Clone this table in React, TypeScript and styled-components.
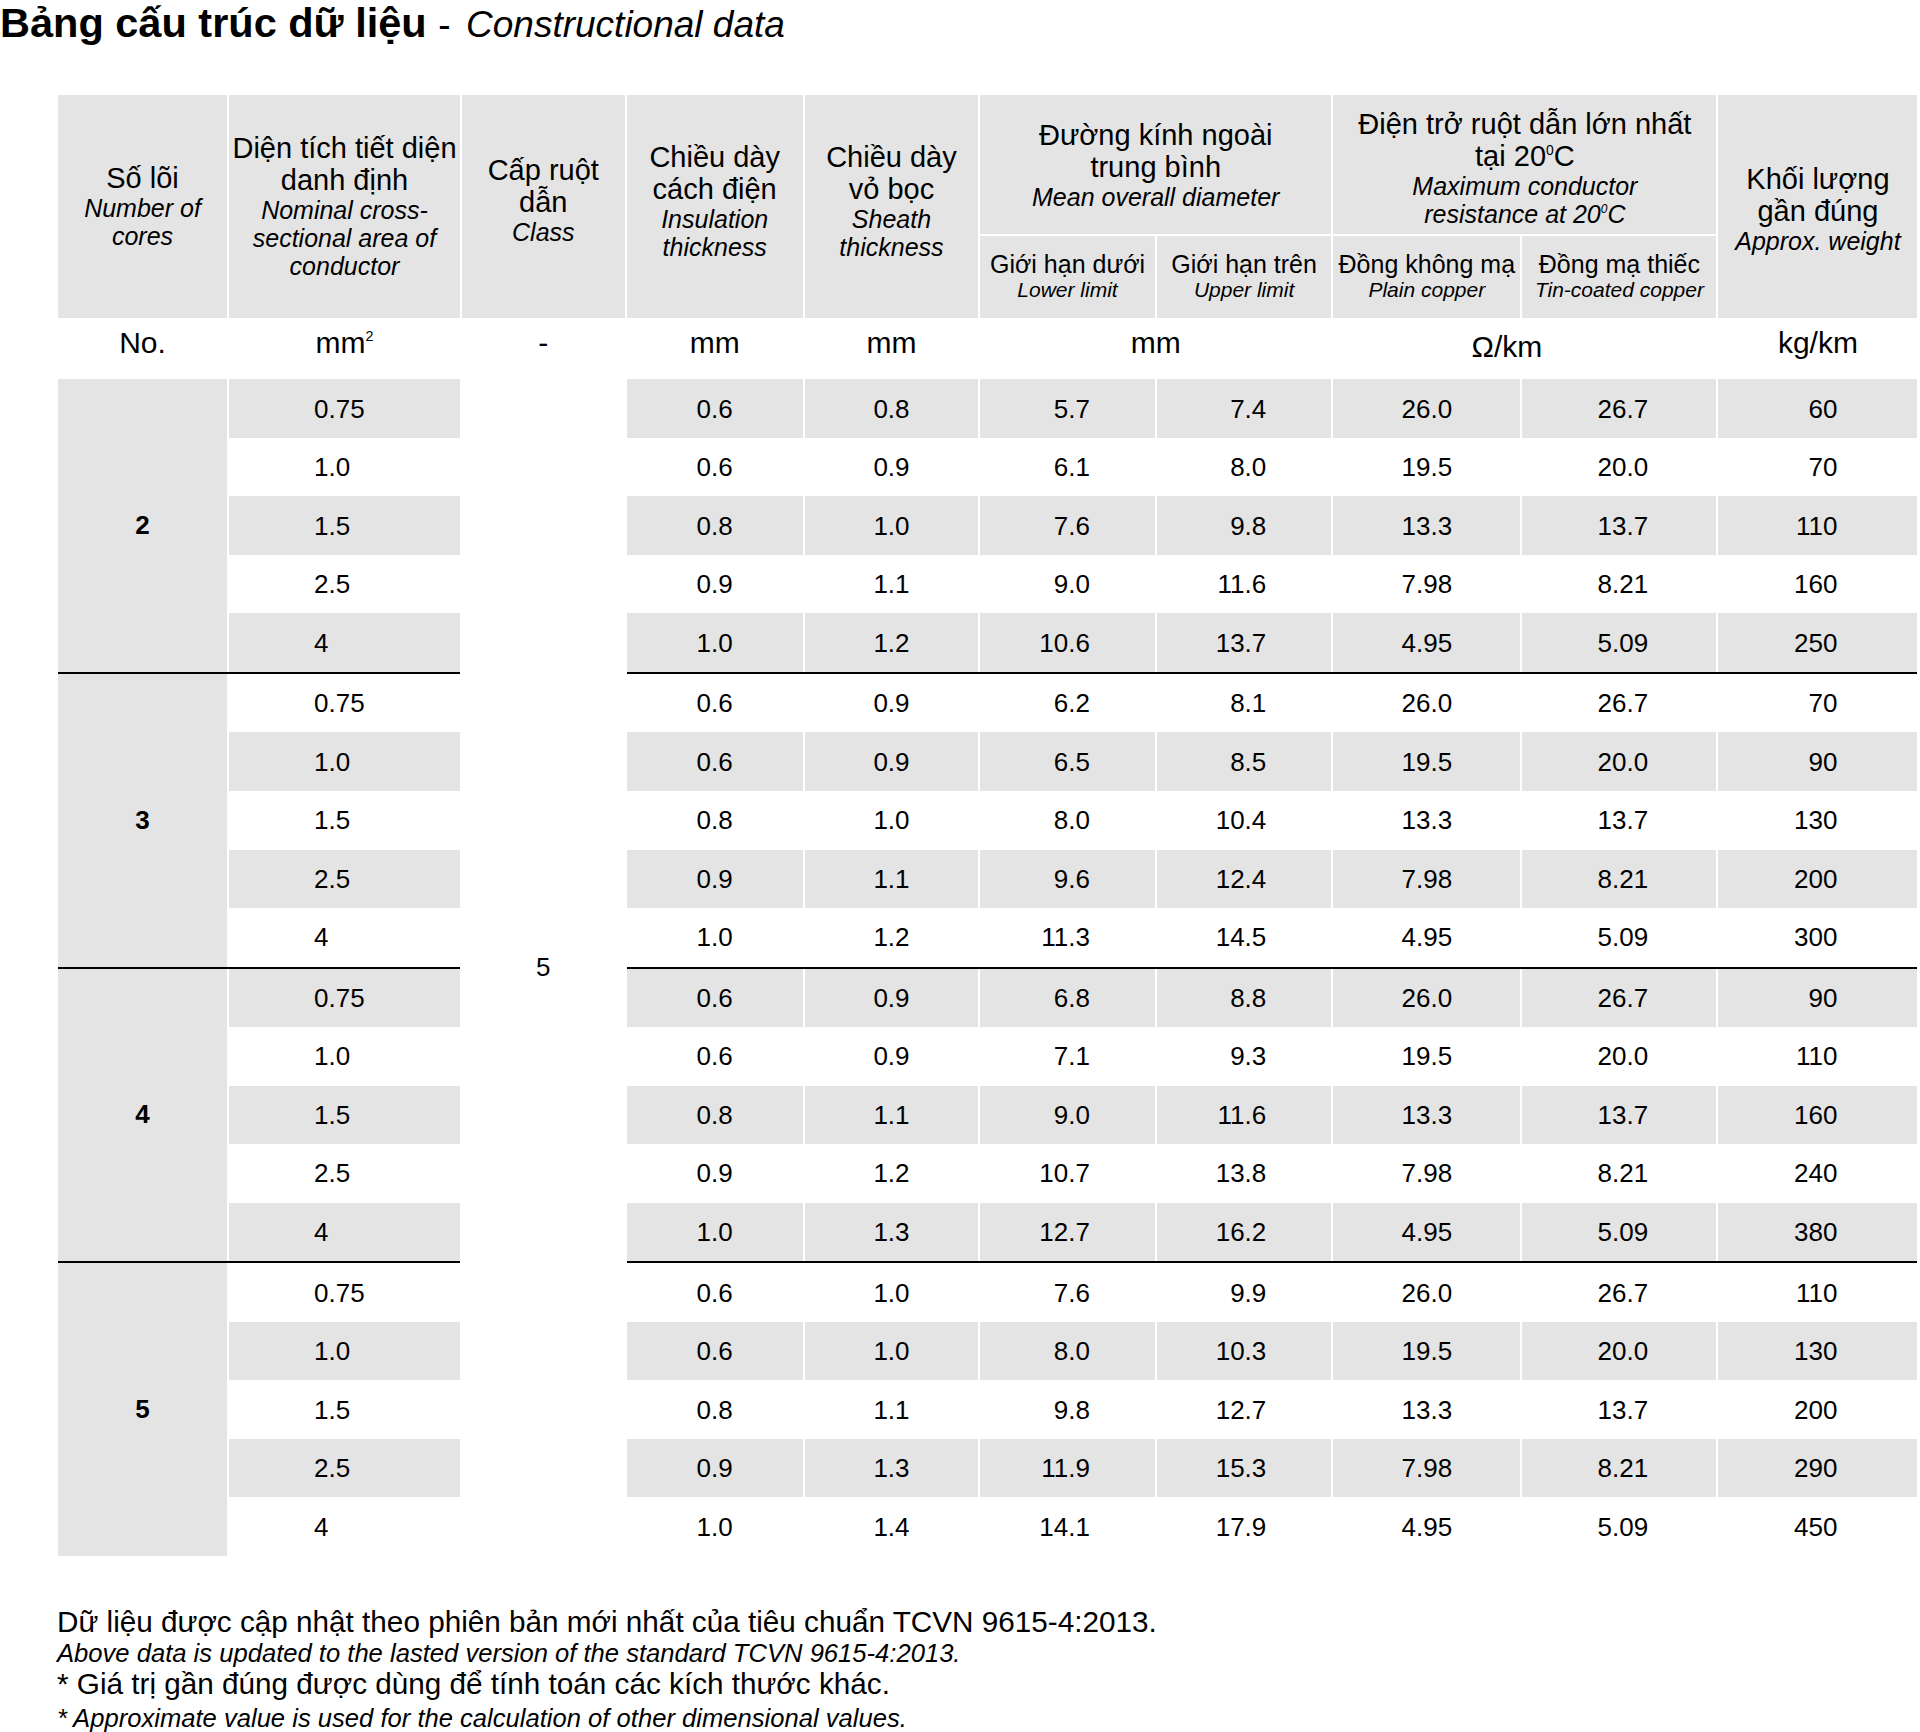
import React from "react";
import styled, { createGlobalStyle, css } from "styled-components";

const GlobalStyle = createGlobalStyle`
  html, body { margin: 0; padding: 0; background: #ffffff; }
  body {
    font-family: "Liberation Sans", Arial, "Noto Sans", sans-serif;
    color: #000;
    overflow-x: hidden;
  }
`;

const GRAY = "#e4e4e4";
const COLS = [168.3, 230, 162, 175.4, 172.7, 174, 173.7, 186.3, 193.3, 198];
const GAP = 2.7;
const TABLE_WIDTH = COLS.reduce((s, w) => s + w, 0) + GAP * (COLS.length + 1);

type Align = "left" | "center" | "right";
type ColCfg = { $align: Align; $pl?: number; $pr?: number };

const VALUE_COLS: ColCfg[] = [
  { $align: "center" },
  { $align: "center" },
  { $align: "right", $pr: 65 },
  { $align: "right", $pr: 65 },
  { $align: "center" },
  { $align: "center", $pl: 7 },
  { $align: "right", $pr: 80 },
];

type Row = [string, string, string, string, string, string, string, string];

const GROUPS: { cores: string; rows: Row[] }[] = [
  {
    cores: "2",
    rows: [
      ["0.75", "0.6", "0.8", "5.7", "7.4", "26.0", "26.7", "60"],
      ["1.0", "0.6", "0.9", "6.1", "8.0", "19.5", "20.0", "70"],
      ["1.5", "0.8", "1.0", "7.6", "9.8", "13.3", "13.7", "110"],
      ["2.5", "0.9", "1.1", "9.0", "11.6", "7.98", "8.21", "160"],
      ["4", "1.0", "1.2", "10.6", "13.7", "4.95", "5.09", "250"],
    ],
  },
  {
    cores: "3",
    rows: [
      ["0.75", "0.6", "0.9", "6.2", "8.1", "26.0", "26.7", "70"],
      ["1.0", "0.6", "0.9", "6.5", "8.5", "19.5", "20.0", "90"],
      ["1.5", "0.8", "1.0", "8.0", "10.4", "13.3", "13.7", "130"],
      ["2.5", "0.9", "1.1", "9.6", "12.4", "7.98", "8.21", "200"],
      ["4", "1.0", "1.2", "11.3", "14.5", "4.95", "5.09", "300"],
    ],
  },
  {
    cores: "4",
    rows: [
      ["0.75", "0.6", "0.9", "6.8", "8.8", "26.0", "26.7", "90"],
      ["1.0", "0.6", "0.9", "7.1", "9.3", "19.5", "20.0", "110"],
      ["1.5", "0.8", "1.1", "9.0", "11.6", "13.3", "13.7", "160"],
      ["2.5", "0.9", "1.2", "10.7", "13.8", "7.98", "8.21", "240"],
      ["4", "1.0", "1.3", "12.7", "16.2", "4.95", "5.09", "380"],
    ],
  },
  {
    cores: "5",
    rows: [
      ["0.75", "0.6", "1.0", "7.6", "9.9", "26.0", "26.7", "110"],
      ["1.0", "0.6", "1.0", "8.0", "10.3", "19.5", "20.0", "130"],
      ["1.5", "0.8", "1.1", "9.8", "12.7", "13.3", "13.7", "200"],
      ["2.5", "0.9", "1.3", "11.9", "15.3", "7.98", "8.21", "290"],
      ["4", "1.0", "1.4", "14.1", "17.9", "4.95", "5.09", "450"],
    ],
  },
];

const Page = styled.main`
  display: block;
`;

const Title = styled.h1`
  margin: 0 0 49px;
  height: 46px;
  font-size: 41.5px;
  line-height: 46px;
  font-weight: 700;
  white-space: nowrap;
`;

const TitleDash = styled.span`
  font-weight: 400;
  font-size: 37px;
`;

const TitleEn = styled.span`
  font-weight: 400;
  font-style: italic;
  font-size: 37px;
  margin-left: 4px;
`;

const Table = styled.table`
  margin-left: 56px;
  border-collapse: separate;
  border-spacing: ${GAP}px 0;
  table-layout: fixed;
  width: ${TABLE_WIDTH}px;
`;

const Col = styled.col<{ $w: number }>`
  width: ${(p) => p.$w}px;
`;

const HeadRow = styled.tr<{ $h: number }>`
  height: ${(p) => p.$h}px;
`;

const HeadCell = styled.th<{ $divider?: boolean; $pt?: number; $pb?: number }>`
  background: ${GRAY};
  padding: ${(p) => p.$pt ?? 0}px 0 ${(p) => p.$pb ?? 0}px;
  font-weight: 400;
  text-align: center;
  vertical-align: middle;
  white-space: nowrap;
  ${(p) =>
    p.$divider &&
    css`
      border-bottom: ${GAP}px solid #ffffff;
    `}
`;

const Vi = styled.span<{ $sub?: boolean }>`
  display: block;
  font-size: ${(p) => (p.$sub ? 25 : 29)}px;
  line-height: ${(p) => (p.$sub ? 26 : 32)}px;
`;

const En = styled.span<{ $sub?: boolean }>`
  display: block;
  font-style: italic;
  font-size: ${(p) => (p.$sub ? 21 : 25)}px;
  line-height: ${(p) => (p.$sub ? 26 : 28)}px;
`;

const Sup = styled.sup`
  font-size: 0.48em;
  line-height: 0;
  vertical-align: 0.8em;
`;

const UnitRow = styled.tr`
  height: 61.6px;
`;

const UnitCell = styled.td<{ $pr?: number; $pb?: number }>`
  padding: 0 ${(p) => p.$pr ?? 0}px ${(p) => p.$pb ?? 10}px 0;
  font-size: 30px;
  line-height: 34px;
  text-align: center;
  vertical-align: middle;
  white-space: nowrap;
`;

const DataRow = styled.tr`
  height: 58.54px;
`;

const ValueCell = styled.td<{ $shade: boolean } & ColCfg>`
  background: ${(p) => (p.$shade ? GRAY : "#ffffff")};
  padding: 0 ${(p) => p.$pr ?? 0}px 0 ${(p) => p.$pl ?? 0}px;
  font-size: 26px;
  line-height: 30px;
  text-align: ${(p) => p.$align};
  vertical-align: middle;
  white-space: nowrap;
`;

const CoreCell = styled.td`
  background: ${GRAY};
  padding: 0;
  font-size: 26px;
  font-weight: 700;
  text-align: center;
  vertical-align: middle;
`;

const ClassCell = styled.td`
  background: #ffffff;
  padding: 0;
  font-size: 26px;
  text-align: center;
  vertical-align: middle;
`;

const SepRow = styled.tr`
  height: 2px;
`;

const SepCell = styled.td`
  height: 2px;
  padding: 0;
  background: #000000;
  font-size: 0;
  line-height: 0;
`;

const Notes = styled.div`
  margin: 50px 0 0 57px;
`;

const NoteVi = styled.p`
  margin: 0;
  font-size: 29.7px;
  line-height: 31px;
  white-space: nowrap;
`;

const NoteEn = styled.p<{ $last?: boolean }>`
  margin: ${(p) => (p.$last ? 3 : 0)}px 0 0;
  padding-top: 1px;
  font-size: 25.6px;
  line-height: 30px;
  font-style: italic;
  white-space: nowrap;
`;

export default function App() {
  return (
    <Page>
      <GlobalStyle />
      <Title>
        Bảng cấu trúc dữ liệu <TitleDash>-</TitleDash>{" "}
        <TitleEn>Constructional data</TitleEn>
      </Title>

      <Table>
        <colgroup>
          {COLS.map((w, i) => (
            <Col key={i} $w={w} />
          ))}
        </colgroup>
        <thead>
          <HeadRow $h={141}>
            <HeadCell rowSpan={2}>
              <Vi>Số lõi</Vi>
              <En>Number of</En>
              <En>cores</En>
            </HeadCell>
            <HeadCell rowSpan={2}>
              <Vi>Diện tích tiết diện</Vi>
              <Vi>danh định</Vi>
              <En>Nominal cross-</En>
              <En>sectional area of</En>
              <En>conductor</En>
            </HeadCell>
            <HeadCell rowSpan={2} $pb={12}>
              <Vi>Cấp ruột</Vi>
              <Vi>dẫn</Vi>
              <En>Class</En>
            </HeadCell>
            <HeadCell rowSpan={2} $pb={10}>
              <Vi>Chiều dày</Vi>
              <Vi>cách điện</Vi>
              <En>Insulation</En>
              <En>thickness</En>
            </HeadCell>
            <HeadCell rowSpan={2} $pb={10}>
              <Vi>Chiều dày</Vi>
              <Vi>vỏ bọc</Vi>
              <En>Sheath</En>
              <En>thickness</En>
            </HeadCell>
            <HeadCell colSpan={2} $divider>
              <Vi>Đường kính ngoài</Vi>
              <Vi>trung bình</Vi>
              <En>Mean overall diameter</En>
            </HeadCell>
            <HeadCell colSpan={2} $divider $pt={7}>
              <Vi>Điện trở ruột dẫn lớn nhất</Vi>
              <Vi>
                tại 20<Sup>0</Sup>C
              </Vi>
              <En>Maximum conductor</En>
              <En>
                resistance at 20<Sup>0</Sup>C
              </En>
            </HeadCell>
            <HeadCell rowSpan={2} $pt={5}>
              <Vi>Khối lượng</Vi>
              <Vi>gần đúng</Vi>
              <En>Approx. weight</En>
            </HeadCell>
          </HeadRow>
          <HeadRow $h={81.7}>
            <HeadCell>
              <Vi $sub>Giới hạn dưới</Vi>
              <En $sub>Lower limit</En>
            </HeadCell>
            <HeadCell>
              <Vi $sub>Giới hạn trên</Vi>
              <En $sub>Upper limit</En>
            </HeadCell>
            <HeadCell>
              <Vi $sub>Đồng không mạ</Vi>
              <En $sub>Plain copper</En>
            </HeadCell>
            <HeadCell>
              <Vi $sub>Đồng mạ thiếc</Vi>
              <En $sub>Tin-coated copper</En>
            </HeadCell>
          </HeadRow>
          <UnitRow>
            <UnitCell>No.</UnitCell>
            <UnitCell>
              mm<Sup>2</Sup>
            </UnitCell>
            <UnitCell>-</UnitCell>
            <UnitCell>mm</UnitCell>
            <UnitCell>mm</UnitCell>
            <UnitCell colSpan={2}>mm</UnitCell>
            <UnitCell colSpan={2} $pr={36} $pb={2}>
              Ω/km
            </UnitCell>
            <UnitCell>kg/km</UnitCell>
          </UnitRow>
        </thead>
        <tbody>
          {GROUPS.map((g, gi) => (
            <React.Fragment key={g.cores}>
              {gi > 0 && (
                <SepRow>
                  <SepCell colSpan={2} />
                  <SepCell colSpan={7} />
                </SepRow>
              )}
              {g.rows.map((r, ri) => {
                const idx = gi * 5 + ri;
                const shade = idx % 2 === 0;
                return (
                  <DataRow key={`${g.cores}-${r[0]}`}>
                    {ri === 0 && <CoreCell rowSpan={5}>{g.cores}</CoreCell>}
                    <ValueCell $shade={shade} $align="left" $pl={85}>
                      {r[0]}
                    </ValueCell>
                    {idx === 0 && <ClassCell rowSpan={23}>5</ClassCell>}
                    {r.slice(1).map((v, ci) => (
                      <ValueCell key={ci} $shade={shade} {...VALUE_COLS[ci]}>
                        {v}
                      </ValueCell>
                    ))}
                  </DataRow>
                );
              })}
            </React.Fragment>
          ))}
        </tbody>
      </Table>

      <Notes>
        <NoteVi>Dữ liệu được cập nhật theo phiên bản mới nhất của tiêu chuẩn TCVN 9615-4:2013.</NoteVi>
        <NoteEn>Above data is updated to the lasted version of the standard TCVN 9615-4:2013.</NoteEn>
        <NoteVi>* Giá trị gần đúng được dùng để tính toán các kích thước khác.</NoteVi>
        <NoteEn $last>* Approximate value is used for the calculation of other dimensional values.</NoteEn>
      </Notes>
    </Page>
  );
}
